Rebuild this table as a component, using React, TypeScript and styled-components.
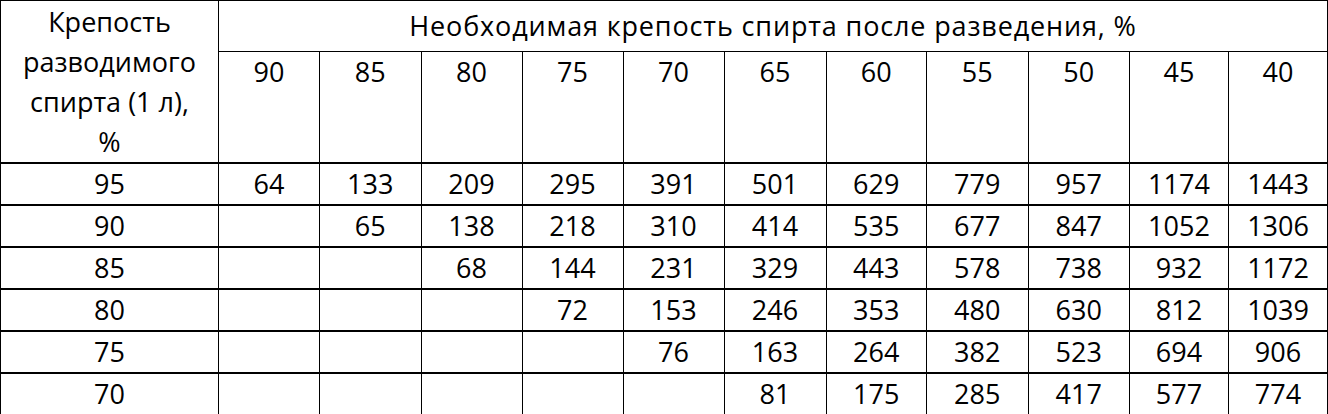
import React from 'react';
import styled, {createGlobalStyle} from 'styled-components';

const GlobalStyle = createGlobalStyle`
  html, body {
    margin: 0;
    padding: 0;
    background: #fff;
  }
  body {
    font-family: 'Open Sans', 'Noto Sans', sans-serif;
    color: #000;
  }
`;

const columns = [90, 85, 80, 75, 70, 65, 60, 55, 50, 45, 40];
const widths = [218, 101, 101.5, 101, 101, 101, 102, 100.5, 101.5, 101.5, 99, 99];

const rows: {strength: number; values: (number | null)[]}[] = [
  {strength: 95, values: [64, 133, 209, 295, 391, 501, 629, 779, 957, 1174, 1443]},
  {strength: 90, values: [null, 65, 138, 218, 310, 414, 535, 677, 847, 1052, 1306]},
  {strength: 85, values: [null, null, 68, 144, 231, 329, 443, 578, 738, 932, 1172]},
  {strength: 80, values: [null, null, null, 72, 153, 246, 353, 480, 630, 812, 1039]},
  {strength: 75, values: [null, null, null, null, 76, 163, 264, 382, 523, 694, 906]},
  {strength: 70, values: [null, null, null, null, null, 81, 175, 285, 417, 577, 774]},
];

const Table = styled.table`
  width: 1328px;
  border-collapse: collapse;
  table-layout: fixed;
  font-size: 27px;
  line-height: 40px;
  text-align: center;
`;

const Corner = styled.th`
  font-weight: 400;
  border: 1px solid #000;
  border-bottom: 2px solid #000;
  padding: 0;
  vertical-align: middle;
`;

const GroupTitle = styled.th`
  font-weight: 400;
  height: 50px;
  border: 1px solid #000;
  padding: 0;
  letter-spacing: 0.85px;
  vertical-align: middle;
`;

const ColHead = styled.th`
  font-weight: 400;
  height: 110px;
  border: 1px solid #000;
  border-bottom: 2px solid #000;
  padding: 0;
  vertical-align: top;
`;

const Cell = styled.td`
  height: 40px;
  padding: 0;
  border-left: 1px solid #000;
  border-right: 1px solid #000;
  border-top: 2px solid #000;
  border-bottom: 2px solid #000;
  vertical-align: middle;
`;

export default function App() {
  return (
    <>
      <GlobalStyle />
      <Table>
        <colgroup>
          {widths.map((w, i) => (
            <col key={i} style={{width: w}} />
          ))}
        </colgroup>
        <thead>
          <tr>
            <Corner rowSpan={2}>
              Крепость
              <br />
              разводимого
              <br />
              спирта (1 л),
              <br />%
            </Corner>
            <GroupTitle colSpan={11}>
              Необходимая крепость спирта после разведения, %
            </GroupTitle>
          </tr>
          <tr>
            {columns.map(c => (
              <ColHead key={c}>{c}</ColHead>
            ))}
          </tr>
        </thead>
        <tbody>
          {rows.map(r => (
            <tr key={r.strength}>
              <Cell>{r.strength}</Cell>
              {r.values.map((v, i) => (
                <Cell key={i}>{v ?? ''}</Cell>
              ))}
            </tr>
          ))}
        </tbody>
      </Table>
    </>
  );
}
